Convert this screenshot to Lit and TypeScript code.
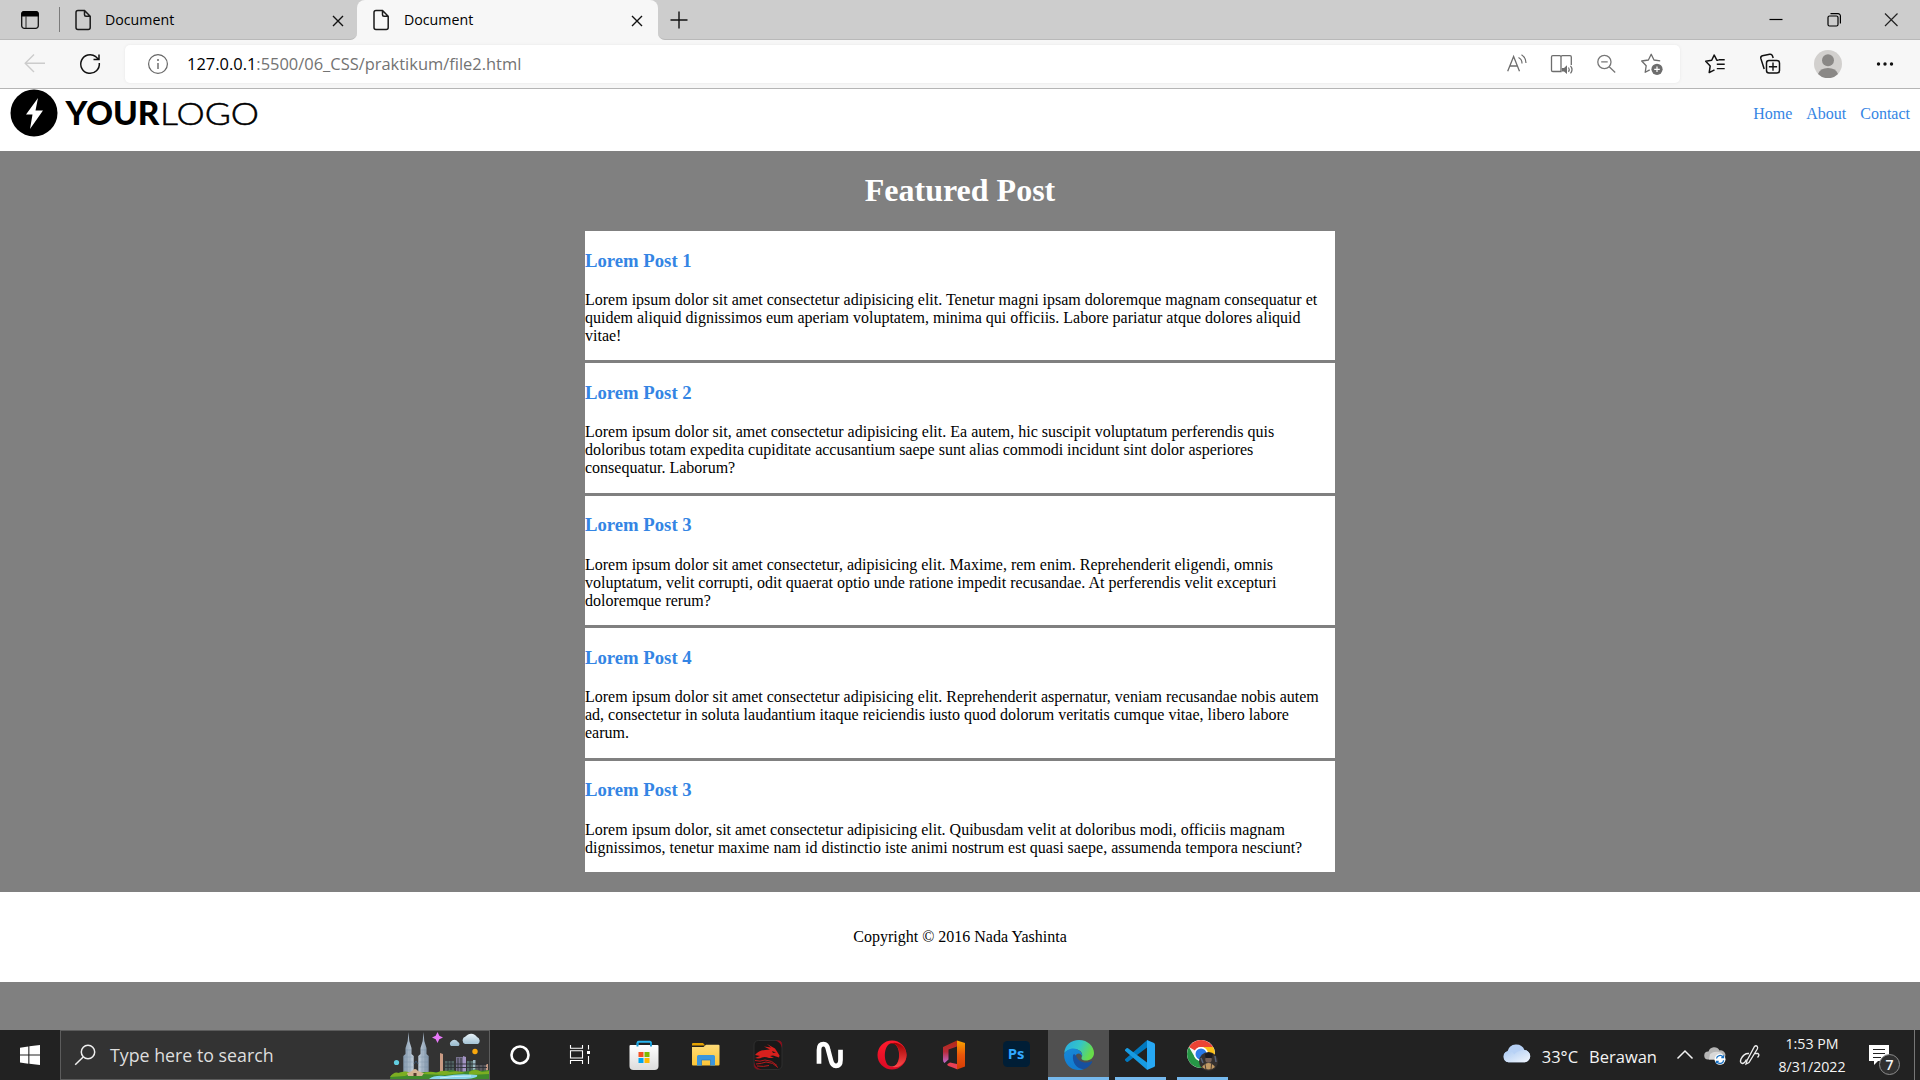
import { LitElement, html, svg, css, type TemplateResult } from "lit";
import { customElement } from "lit/decorators.js";

/** Every icon is drawn around the origin, so it stays centred in its cell. */
const ico = (w: number, h: number, body: unknown): TemplateResult =>
  html`<svg width=${w} height=${h} viewBox="${-w / 2} ${-h / 2} ${w} ${h}" fill="none">${body}</svg>`;

const closeX = ico(14, 14, svg`<path d="M-5-5L5 5M5-5L-5 5" stroke="#111" stroke-width="1.4"/>`);

const pageIcon = ico(18, 22, svg`<path d="M-5-9.5H1.5L7.2-3.8V7.5a2 2 0 0 1-2 2H-5a2 2 0 0 1-2-2V-7.5a2 2 0 0 1 2-2ZM1.5-9.5V-5.3a1.5 1.5 0 0 0 1.5 1.5H7.2" stroke="#1a1a1a" stroke-width="1.5"/>`);

const icons = {
  workspace: ico(20, 20, svg`
    <rect x="-8.3" y="-8.3" width="16.6" height="16.6" rx="2.6" stroke="#111" stroke-width="1.3"/>
    <path d="M-8.8-3.6V-6a3 3 0 0 1 3-3H5.8a3 3 0 0 1 3 3v2.400Z" fill="#000"/><path d="M-4-4V8" stroke="#333" stroke-width="1.1"/>`),
  plus: ico(20, 20, svg`<path d="M-8.500 0H8.500M0-8.500V8.500" stroke="#111" stroke-width="1.4"/>`),
  minimize: ico(16, 16, svg`<path d="M-6.500-.5H6.500" stroke="#000" stroke-width="1.2"/>`),
  restore: ico(16, 16, svg`<rect x="-6" y="-4" width="10" height="10" rx="1.500" stroke="#000" stroke-width="1.2"/><path d="M-3.500-6.400H4a2.400 2.400 0 0 1 2.400 2.400V3.500" stroke="#000" stroke-width="1.2"/>`),
  close: ico(16, 16, svg`<path d="M-6-6.500L6.500 6M6.500-6.500L-6 6" stroke="#222" stroke-width="1.200"/>`),
  back: ico(24, 24, svg`<path d="M10-.8H-9.500M-1-9.500L-9.800-.8L-1 8" stroke="#ccc" stroke-width="1.400"/>`),
  refresh: ico(24, 24, svg`<path d="M9.300-1A9.300 9.300 0 1 1 5.800-7.300L8-5.300M9-9.600V-4.600H3.500" stroke="#111" stroke-width="1.500"/>`),
  info: ico(22, 22, svg`<circle r="9.400" stroke="#666" stroke-width="1.200"/><path d="M0-1V5" stroke="#666" stroke-width="1.400"/><circle cy="-4" r="1" fill="#666"/>`),
  read: ico(24, 24, svg`<path d="M-9.300 7.300L-3.400-7.500L2.500 7.300M-7.200 2H.5" stroke="#6d6d6d" stroke-width="1.300"/><path d="M1.500-6.500A6.500 6.500 0 0 1 5-.5M4.500-9.300A10 10 0 0 1 9-1" stroke="#6d6d6d" stroke-width="1.200"/>`),
  book: ico(26, 24, svg`<path d="M-1 7.500V-7a1.300 1.300 0 0 0-1.300-1.300H-9.200A1.300 1.300 0 0 0-10.500-7V6.200A1.300 1.300 0 0 0-9.200 7.500ZM-1-7A1.300 1.300 0 0 1 .3-8.300H8A1.300 1.300 0 0 1 9.300-7V1" stroke="#6d6d6d" stroke-width="1.300"/><path d="M-.2 4H2L5 1.200V10L2 7.600H-.2Z" fill="#6d6d6d"/><path d="M6.500 3.500Q8 5.500 6.500 7.800M8.500 1.800Q11.500 5.500 8.500 9.400" stroke="#6d6d6d" stroke-width="1.200"/>`),
  zoom: ico(24, 24, svg`<g transform="translate(-.8 0)"><circle cx="-1.800" cy="-2" r="6.600" stroke="#777" stroke-width="1.300"/><path d="M3 2.800L9 8.500M-5-2.200H1.500" stroke="#777" stroke-width="1.300"/></g>`),
  star: ico(26, 24, svg`<g transform="translate(-.8 -.5)"><path d="M9-2.700L2.800-3.500L0-9.200L-2.800-3.500L-9.500-2.500L-5 2.200L-6 8.800L-1.500 6.400" stroke="#6d6d6d" stroke-width="1.300" stroke-linejoin="round"/><circle cx="5.800" cy="5.800" r="5.600" fill="#6d6d6d"/><path d="M3 5.800H8.600M5.800 3V8.600" stroke="#fff" stroke-width="1.200"/></g>`),
  favorites: ico(24, 24, svg`<path d="M3.500-3.800L1.800-3.800L-.8-9L-3.300-3.700L-9.300-2.800L-4.800 1.900L-5.800 8.600L-.5 5.800" stroke="#111" stroke-width="1.500" stroke-linejoin="round"/><path d="M3.500-4.200H9.700M1.800 .2H9.700M1.800 4.600H9.700" stroke="#111" stroke-width="1.400"/>`),
  collections: ico(24, 24, svg`<g transform="translate(-.8 -.4)"><rect x="-3.700" y="-3.200" width="13" height="12.600" rx="2.500" stroke="#111" stroke-width="1.500"/><path d="M2.800-1V7.200M-1.300 3.100H6.900" stroke="#111" stroke-width="1.400"/><path d="M-6 5.300L-9.400-5.200Q-9.800-7.200-7.800-7.800L-.5-9.400Q1.500-9.800 2.200-7.800L3-5.500" stroke="#111" stroke-width="1.500"/></g>`),
  avatar: ico(28, 28, svg`<circle r="14" fill="#d2d0ce"/><circle cy="-3.800" r="6" fill="#8a8886"/><path d="M-10 10Q-8 4 0 4T10 10A14 14 0 0 1-10 10Z" fill="#8a8886"/>`),
  dots: ico(20, 8, svg`<circle cx="-6.500" r="1.700" fill="#111"/><circle r="1.700" fill="#111"/><circle cx="6.500" r="1.700" fill="#111"/>`),

  windows: ico(20, 20, svg`<path d="M-10-7.200L-1.700-8.500V-.6H-10ZM-.6-8.700L10-10V-.6H-.6ZM-10 .5H-1.700V8.700L-10 7.500ZM-.6 .5H10V10L-.6 8.800Z" fill="#fff"/>`),
  search: ico(22, 22, svg`<circle cx="3" cy="-3" r="6.700" stroke="#f0f0f0" stroke-width="1.500"/><path d="M-1.800 2L-9.800 9.800" stroke="#f0f0f0" stroke-width="1.500"/>`),
  cortana: ico(22, 22, svg`<circle r="8.500" stroke="#fff" stroke-width="2.600"/>`),
  taskview: ico(22, 22, svg`<path d="M-9.500-10V-6.700H2.500V-10M-9.500 9V5.500H2.500V9M-9.500-4.300H2.500V3H-9.500ZM8.500-10V-5.500M8.500 1V9" stroke="#fff" stroke-width="1.100"/><rect x="7" y="-4" width="3" height="3" fill="#fff"/>`),
  store: ico(30, 30, svg`
    <defs><linearGradient id="st" x2="0" y2="1"><stop stop-color="#fff"/><stop offset="1" stop-color="#dcdcdc"/></linearGradient></defs>
    <path d="M-6.500-9V-12.200A1.200 1.200 0 0 1-5.300-13.200H5.800A1.200 1.200 0 0 1 7-12.200V-9" stroke="#29b6f0" stroke-width="1.900"/>
    <path d="M-13.500-10H13.500A1 1 0 0 1 14.500-9V11A4 4 0 0 1 10.500 15H-10.500A4 4 0 0 1-14.500 11V-9A1 1 0 0 1-13.500-10Z" fill="url(#st)"/>
    <path d="M-6.500-8.500V-12M7-8.500V-12" stroke="#1599d6" stroke-width="1.900"/>
    <path d="M-5.500-3H-.5V2H-5.500Z" fill="#f25022"/><path d="M.5-3H5.500V2H.5Z" fill="#7fba00"/><path d="M-5.500 3H-.5V8H-5.500Z" fill="#00a4ef"/><path d="M.5 3H5.500V8H.5Z" fill="#ffb900"/>`),
  explorer: ico(30, 26, svg`
    <defs><linearGradient id="ex" x2="0" y2="1"><stop stop-color="#ffdc78"/><stop offset="1" stop-color="#fcc536"/></linearGradient></defs>
    <path d="M-14-11Q-14-12-13-12H-3L-.8-9.500H-14Z" fill="#e6a200"/><path d="M-14-9V9.500Q-14 10.500-13 10.500H12.500Q13.500 10.500 13.500 9.500V-9.300Q13.500-10.200 12.500-10.200H0L-2.500-8H-14Z" fill="url(#ex)"/>
    <path d="M-9 10.500V1.500A1.500 1.500 0 0 1-7.500 0H7.500A1.500 1.500 0 0 1 9 1.500V10.500H4.500V5H-4.500V10.500Z" fill="#3b96dd"/><path d="M-4.500 10.500V5H4.500V10.500" stroke="#2277c4" stroke-width=".7"/>`),
  dragon: ico(30, 30, svg`
    <rect x="-14" y="-14.500" width="28" height="29" rx="4.500" fill="#191919" stroke="#333" stroke-width=".8"/>
    <path d="M7-14.500H10A4 4 0 0 1 14-10.500V-7Q13-13 7-14.500ZM-14 7V10A4.500 4.500 0 0 0-9.500 14.500H-6Q-13 13-14 7Z" fill="#8c0f1c"/>
    <path d="M-13 0Q-9-4.500-3-5L2-5.500L-4-8.500L3-7.500L-1-11L7-6.500L9-3.500L11.500 .5L11 2.500L8 1.500L5 .5L2 1L6 3L1 3Q-3 1.500-6 2.500Q-9 4-13 3L-8 1Z" fill="#d8201d"/>
    <path d="M-13 5.500Q-8 7-3 5Q4 5 9 10.500M-12 9Q-6 8.500-2 7Q5 7 10 12.500M-11 11Q-4 12 1 10.500" stroke="#b81a1c" stroke-width="1"/>
    <path d="M4-4L8-2.500L5-2Z" fill="#191919"/>`),
  nIcon: ico(30, 30, svg`<path d="M-11 6.500V-5Q-11-10.800-6.500-10.800Q-2.700-10.800-1.800-5L1 5.500Q2.200 10.800 6 10.800Q10.500 10.800 10.500 5V-3" stroke="#fff" stroke-width="4.700" stroke-linecap="square" stroke-linejoin="round"/>`),
  opera: ico(30, 30, svg`
    <defs><linearGradient id="op" x2="0" y2="1"><stop stop-color="#ff1b2d"/><stop offset="1" stop-color="#d90a24"/></linearGradient><linearGradient id="op2" x2="0" y2="1"><stop stop-color="#9c0000"/><stop offset="1" stop-color="#ff4b4b"/></linearGradient></defs>
    <path fill-rule="evenodd" d="M0-14.500A14.500 14.500 0 1 0 0 14.500A14.500 14.500 0 1 0 0-14.500ZM0-11.800C-9.500-11.800-9.500 11.800 0 11.800C9.500 11.800 9.500-11.800 0-11.800Z" fill="url(#op)"/>
    <path d="M-4.500-9.800C3-16 14.500-10 14.500 0S3 16-4.500 9.800C2.500 14.500 7.500 8 7.500 0S2.500-14.500-4.500-9.800Z" fill="url(#op2)"/>`),
  office: ico(26, 30, svg`
    <defs><linearGradient id="of" x2="0" y2="1"><stop stop-color="#b22a12"/><stop offset=".5" stop-color="#b92b3b"/><stop offset="1" stop-color="#c06ad0"/></linearGradient><linearGradient id="of2" x2="0" y2="1"><stop stop-color="#f7a400"/><stop offset=".5" stop-color="#e9560a"/><stop offset="1" stop-color="#d43b06"/></linearGradient></defs>
    <path d="M-11-8L3-14.500V-8.500L-5.500-5.500V4.500L-9.500 8Q-11 7-11 5Z" fill="url(#of)"/><path d="M-6.500 9L-4 7.500L3 9V14.300Q0 13-5.500 11Q-7.500 10-6.500 9Z" fill="#e94055"/><path d="M3-14.500L11-12V11.500L3 14.500Z" fill="url(#of2)"/>`),
  edge: ico(30, 30, svg`
    <defs><linearGradient id="e1" x2="1" y2=".35"><stop stop-color="#26a9e6"/><stop offset=".55" stop-color="#35c5c6"/><stop offset="1" stop-color="#68dc4a"/></linearGradient><linearGradient id="e2" x2=".4" y2="1"><stop stop-color="#1789d8"/><stop offset="1" stop-color="#127bd0"/></linearGradient></defs>
    <path d="M-14.800-2C-14-10-8-15 0-15C9-15 15-8.500 15-2C15 3 11 5.500 7 5.500C3.500 5.500 1.700 4 2.800 2C5-4-3-7-8-5.500C-11-5-13.500-3.500-14.800-2Z" fill="url(#e1)"/>
    <path d="M-14.900-1C-13-5-7-8-1.500-5.500C2-4 3.700-1 3.200 1.500C2-2-2-3-3.500 1C-4.500 6 0 12 5 14C-5 18-15.500 10-14.900-1Z" fill="url(#e2)"/>
    <path d="M-6 0C-7 8-2 14 4.500 14.200C8.500 13 11 10.500 13 7.400C13.500 6.500 12.800 6 12 6.500C6 9.500-1.500 6-2.800 1C-4-1-5.500-1-6 0Z" fill="#1650a0"/>`),
  vscode: ico(30, 30, svg`<path d="M7-7.500L-12 6.800Q-12.700 7.400-13.500 6.700L-14.800 5.500Q-15.500 4.700-14.700 4L7-14.800Z" fill="#0078bf"/><path d="M7 7.500L-12-6.800Q-12.700-7.400-13.500-6.700L-14.800-5.500Q-15.500-4.700-14.700-4L7 14.800Z" fill="#179be2"/><path d="M7-15L14-12Q15-11.500 15-10.500V10.500Q15 11.500 14 12L7 15Z" fill="#27a8f4"/>`),
  chrome: ico(34, 32, svg`
    <g transform="translate(-1 -1)"><circle r="14" fill="#f5f5f5"/><path d="M-12.100-7A14 14 0 0 1 12.100-7H0A7 7 0 0 0-6-3.500Z" fill="#ea4335"/><path d="M-12.100-7A14 14 0 0 0 0 14L6 3.500A7 7 0 0 1-6 3.500Z" fill="#269746"/><path d="M12.100-7A14 14 0 0 1 0 14L6 3.500A7 7 0 0 0 0-7Z" fill="#fbc116"/><circle r="7" fill="#fff"/><circle r="5.500" fill="#2879e8"/></g>
    <circle cx="6.500" cy="6.500" r="9.500" fill="#34302f"/><path d="M0 12Q3 8 6.500 8T13 12A9.500 9.500 0 0 1 0 12Z" fill="#c29a65"/><circle cx="6.500" cy="4.500" r="3.200" fill="#756057"/><path d="M3-1Q7-4 11-1L10 3H3.500Z" fill="#1b1a20"/><path d="M3 9L4 15M9.500 9L9 15" stroke="#4a3b30"/><path d="M-1 3L1 8M13 1L14 7" stroke="#59647a" stroke-width="1.500"/>`),
  cloud: ico(30, 22, svg`
    <defs><linearGradient id="cl" x2="1" y2="1"><stop stop-color="#a9c9f2"/><stop offset="1" stop-color="#f3f7fd"/></linearGradient></defs>
    <g transform="translate(0 -1.500)"><path d="M-8.500 8.800A5.700 5.700 0 0 1-9.500-2.300A9 9 0 0 1 7.500-3.500A6.200 6.200 0 0 1 8 8.800Z" fill="#b7d1f5"/><path d="M-8.500 8.800A5.700 5.700 0 0 1-8.500-2.400Q-4-2.200-3 1Q1-3.500 7.500-3.500A6.200 6.200 0 0 1 8 8.800Z" fill="url(#cl)"/></g>`),
  chevron: ico(18, 12, svg`<path d="M-7.500 3.500L0-4L7.500 3.500" stroke="#f2f2f2" stroke-width="1.500"/>`),
  onedrive: ico(22, 20, svg`<path d="M-7 4.500A4 4 0 0 1-6.500-3.500A6 6 0 0 1 4.500-4.500A4.500 4.500 0 0 1 7 4.500Z" fill="#b5b5b5"/><path d="M-5-1Q0-5 7-2L5 4.500H-6Z" fill="#d9d9d9"/><circle cx="5" cy="4.300" r="5.500" fill="#fff"/><path d="M1.500 3.500A3.600 3.600 0 0 1 8 2M8.600 5.200A3.600 3.600 0 0 1 2 6.800M8.500 .3V2.500H6.300M1.500 8.500V6.300H3.700" stroke="#1670c4" stroke-width="1.300"/>`),
  pen: ico(24, 24, svg`<path d="M-3 5.500L4.500-8.500Q6-10 7.300-8.500Q8-7.500 7.300-6L-1 7.500L-4 9Z" stroke="#eee" stroke-width="1.300"/><path d="M-1-1.500Q-6-2-9 4Q-10.500 8-7.500 8.500Q-5 8-3.500 4.500M4.500-1.500H8Q10 0 7.500 2.500" stroke="#eee" stroke-width="1.400"/>`),
};

const skyline = html`<svg class="skyline" width="104" height="48" viewBox="0 3 104 48">
  <defs><linearGradient id="tw"><stop stop-color="#8498ac"/><stop offset=".5" stop-color="#d0dce7"/><stop offset="1" stop-color="#7f93a8"/></linearGradient>
  <linearGradient id="ck" x2="0" y2="1"><stop stop-color="#e8f3f9"/><stop offset="1" stop-color="#98b9cd"/></linearGradient></defs>
  <path d="M23.500 4L24.300 13L26.500 20V26L28.700 28V47H18.300V28L20.500 26V20L22.700 13ZM38.500 4L39.300 13L41.500 20V26L43.700 28V47H33.300V28L35.500 26V20L37.700 13Z" fill="url(#tw)"/>
  <path d="M20.500 22H26.500M35.500 22H41.500M19 29H28M34 29H43M19 34H28M34 34H43M19 39H28M34 39H43M22 21V46M25 21V46M37 21V46M40 21V46" stroke="#66829a" stroke-width=".5" opacity=".5"/>
  <path d="M29 36L31 33L33 36" stroke="#39516b" fill="none"/>
  <path d="M52.500 4L54.300 7.800L58 9.500L54.300 11.200L52.500 15L50.700 11.200L47 9.500L50.700 7.800Z" fill="#e879f9"/>
  <path d="M66 18A2.800 2.800 0 0 1 66 13.500A4 4 0 0 1 73 14A2.300 2.300 0 0 1 73.500 18ZM80 16A4 4 0 0 1 80.500 8.500A7 7 0 0 1 92 9A4 4 0 0 1 93 16Z" fill="url(#ck)"/>
  <circle cx="11.500" cy="34.500" r="2.600" fill="#62cfe2"/><circle cx="90" cy="23.500" r="2.700" fill="#faa80c"/>
  <path d="M55 25L58 26V46H55Z" fill="#c99a83"/><path d="M60 33H69V45H60Z" fill="#4f6261"/><path d="M71 29H78V45H71Z" fill="#77718e"/><path d="M78 28L81 29V45H78Z" fill="#a393c4"/><path d="M82 33H90V45H82Z" fill="#566d6b"/><path d="M88 32H90.500V45H88Z" fill="#9cb9c5"/><path d="M91 37H102V45H91Z" fill="#5c5b60"/><path d="M101 36H103V46H101Z" fill="#c59a84"/>
  <path d="M60 36H102M60 39.500H102M63 31V45M66 31V45M73 30V45M76 30V45M85 33V45M94 37V45M98 37V45" stroke="#2d3035" stroke-width=".9"/>
  <path d="M5 51Q5 46 11 46Q16 43 22 44H60Q66 40 73 44L85 43Q90 40 95 43L104 42V51Z" fill="#3f8a2c"/>
  <path d="M5 49Q9 43 14 45Q20 42 27 45L20 48ZM36 46Q45 42 51 45Q58 41 65 44Q74 42 80 45L60 47ZM84 44Q90 40 97 44L104 43V46L84 47Z" fill="#7cae22"/>
  <path d="M22 45Q25 44 27 43Q30 39 33 43L39 45L37 48H23Z" fill="#d5b493"/><path d="M28.500 45H31.500V48H28.500Z" fill="#553b2b"/>
  <path d="M44 51Q49 47 60 48Q75 45 92 47Q94 50 80 51Z" fill="#87d5ee"/><path d="M55 50Q68 48 86 48" stroke="#cceff8" fill="none"/>
</svg>`;

const posts = [
  ["Lorem Post 1", "Lorem ipsum dolor sit amet consectetur adipisicing elit. Tenetur magni ipsam doloremque magnam consequatur et quidem aliquid dignissimos eum aperiam voluptatem, minima qui officiis. Labore pariatur atque dolores aliquid vitae!"],
  ["Lorem Post 2", "Lorem ipsum dolor sit, amet consectetur adipisicing elit. Ea autem, hic suscipit voluptatum perferendis quis doloribus totam expedita cupiditate accusantium saepe sunt alias commodi incidunt sint dolor asperiores consequatur. Laborum?"],
  ["Lorem Post 3", "Lorem ipsum dolor sit amet consectetur, adipisicing elit. Maxime, rem enim. Reprehenderit eligendi, omnis voluptatum, velit corrupti, odit quaerat optio unde ratione impedit recusandae. At perferendis velit excepturi doloremque rerum?"],
  ["Lorem Post 4", "Lorem ipsum dolor sit amet consectetur adipisicing elit. Reprehenderit aspernatur, veniam recusandae nobis autem ad, consectetur in soluta laudantium itaque reiciendis iusto quod dolorum veritatis cumque vitae, libero labore earum."],
  ["Lorem Post 3", "Lorem ipsum dolor, sit amet consectetur adipisicing elit. Quibusdam velit at doloribus modi, officiis magnam dignissimos, tenetur maxime nam id distinctio iste animi nostrum est quasi saepe, assumenda tempora nesciunt?"],
];

@customElement("browser-chrome")
class BrowserChrome extends LitElement {
  static styles = css`
    :host { display: block; font-family: "Open Sans", "Noto Sans", sans-serif; color: #000; }
    * { box-sizing: border-box; }
    svg { display: block; flex: none; }
    .strip { display: flex; height: 40px; background: #f7f7f7; }
    .dark { background: #cdcdcd; border-bottom: 1px solid #b9b9b9; display: flex; align-items: center; height: 40px; }
    .left { width: 357px; border-bottom-right-radius: 7px; }
    .work { width: 59px; display: flex; justify-content: center; }
    .rule { width: 1px; height: 25px; background: #7b7b7b; margin-right: 14px; }
    .tab { flex: 1; display: flex; align-items: center; font-size: 14.200px; line-height: 20px; }
    .tab span { flex: 1; margin-left: 13px; }
    .tab .x { width: 14px; margin-right: 12px; margin-top: 2px; }
    .wrap { width: 301px; height: 40px; background: linear-gradient(#cdcdcd 20px, #f7f7f7 20px); }
    .active { height: 40px; padding-left: 15px; background: #f7f7f7; border-radius: 8px 8px 0 0; }
    .active span { margin-left: 14px; }
    .active .x { margin-right: 14px; }
    .right { flex: 1; border-bottom-left-radius: 7px; justify-content: space-between; padding-left: 11px; }
    .controls { display: flex; }
    .controls div { width: 57.500px; display: flex; justify-content: center; }
    .toolbar { display: flex; align-items: center; height: 49px; background: #f7f7f7; border-bottom: 1px solid #b5b5b5; }
    .nav { width: 125px; display: flex; gap: 31px; padding-left: 23px; }
    .address { width: 1555px; height: 38px; background: #fff; border-radius: 5px; box-shadow: 0 0 3px #e6e6e6; display: flex; align-items: center; padding: 0 6px 0 22px; font-size: 16.450px; }
    .url { flex: 1; margin-left: 18px; color: #737373; line-height: 24px; }
    .url b { font-weight: 400; color: #000; }
    .cell { width: 45px; display: flex; justify-content: center; }
    .actions { flex: 1; display: grid; grid-template-columns: 56px 55px 59px 56px; padding-left: 7px; align-items: center; justify-items: center; }
  `;
  render() {
    return html`
      <div class="strip">
        <div class="dark left"><div class="work">${icons.workspace}</div><div class="rule"></div>
          <div class="tab">${pageIcon}<span>Document</span><div class="x">${closeX}</div></div></div>
        <div class="wrap"><div class="tab active">${pageIcon}<span>Document</span><div class="x">${closeX}</div></div></div>
        <div class="dark right">${icons.plus}<div class="controls"><div>${icons.minimize}</div><div>${icons.restore}</div><div>${icons.close}</div></div></div>
      </div>
      <div class="toolbar">
        <div class="nav">${icons.back}${icons.refresh}</div>
        <div class="address">${icons.info}<div class="url"><b>127.0.0.1</b>:5500/06_CSS/praktikum/file2.html</div>
          ${[icons.read, icons.book, icons.zoom, icons.star].map((i) => html`<div class="cell">${i}</div>`)}</div>
        <div class="actions">${icons.favorites}${icons.collections}${icons.avatar}${icons.dots}</div>
      </div>`;
  }
}

@customElement("blog-page")
class BlogPage extends LitElement {
  static styles = css`
    :host { display: block; height: 941px; background: #808080; font: 16px/18px "Liberation Serif", serif; color: #000; }
    * { box-sizing: border-box; }
    header { height: 62px; background: #fff; display: flex; justify-content: space-between; padding: 0 10px; }
    .logo { display: block; }
    .bold { font: 900 31.500px Lato, sans-serif; }
    .thin { font: 300 31.500px Lato, sans-serif; }
    nav { display: flex; gap: 14px; padding-top: 16px; }
    .link { color: #3485e4; text-decoration: none; }
    h1 { margin: 0; padding: 21.440px 0; font-size: 32px; line-height: 37px; color: #fff; text-align: center; }
    main { width: 750px; margin: 0 auto; display: flex; flex-direction: column; gap: 3px; padding-bottom: 20px; }
    article { background: #fff; padding: 18.720px 0 15.500px; }
    h3 { margin: 0 0 19.220px; font-size: 18.720px; line-height: 22px; color: #3485e4; }
    p { margin: 0; }
    footer { height: 90px; background: #fff; display: flex; align-items: center; justify-content: center; }
  `;
  render() {
    return html`
      <header>
        <svg class="logo" width="252" height="50" viewBox="10 89 252 50">
          <circle cx="34" cy="113" r="23.500"/><path d="M38 98L26 114.500H32.500L30 129L43 110.500H35.500Z" fill="#fff"/>
          <text class="bold" x="65.500" y="124.500" textLength="94" lengthAdjust="spacingAndGlyphs">YOUR</text>
          <text class="thin" x="160" y="124.500" textLength="99" lengthAdjust="spacingAndGlyphs" stroke="#000" stroke-width=".5">LOGO</text>
        </svg>
        <nav>${["Home", "About", "Contact"].map((t) => html`<a class="link">${t}</a>`)}</nav>
      </header>
      <h1>Featured Post</h1>
      <main>${posts.map(([t, b]) => html`<article><h3>${t}</h3><p>${b}</p></article>`)}</main>
      <footer>Copyright © 2016 Nada Yashinta</footer>`;
  }
}

@customElement("task-bar")
class TaskBar extends LitElement {
  static styles = css`
    :host { display: flex; height: 50px; background: #222; color: #f4f4f4; font-family: "Open Sans", "Noto Sans", sans-serif; }
    * { box-sizing: border-box; }
    svg { display: block; flex: none; }
    .cell { width: 60px; display: flex; align-items: center; justify-content: center; }
    .search { width: 430px; height: 50px; border: 1px solid #5c5c5c; background: #333; display: flex; align-items: center; padding-left: 13px; font-size: 17.800px; color: #dedede; }
    .search span { flex: 1; margin-left: 14px; }
    .app { width: 62px; display: flex; align-items: center; justify-content: center; }
    .apps { display: flex; margin-left: 3px; }
    .run { background: linear-gradient(#76b9ed, #76b9ed) center bottom / 51px 3px no-repeat; }
    .current { background: linear-gradient(#76b9ed, #76b9ed) bottom / 100% 3px no-repeat #505050; width: 61px; margin-left: 1px; }
    .ps { width: 27px; height: 26px; border-radius: 4.500px; background: #001e36; color: #31a8ff; font-weight: 700; font-size: 14.800px; display: flex; align-items: center; justify-content: center; margin-top: -2px; padding-bottom: 2px; }
    .tray { flex: 1; display: flex; align-items: center; justify-content: flex-end; }
    .weather { display: flex; align-items: center; font-size: 16.500px; white-space: pre; }
    .deg { margin: 2px 11px 0 10px; }
    .city { margin: 2px 19px 0 0; }
    .chev { margin-right: 10px; }
    .drive { margin-right: 12px; }
    .clock { width: 78px; margin-left: 11px; font-size: 14.200px; line-height: 23px; text-align: center; }
    .note { position: relative; width: 44px; height: 50px; margin-left: 11px; }
    .bubble { position: absolute; left: 7px; top: 15px; }
    .count { position: absolute; left: 17px; top: 24px; width: 21px; height: 21px; border: 1px solid #8c8c8c; border-radius: 50%; background: #303030; font-size: 14px; font-weight: 600; line-height: 19px; text-align: center; }
    .edge { width: 1px; height: 50px; background: #777; margin-left: 8px; margin-right: 5px; }
  `;
  render() {
    return html`
      <div class="cell">${icons.windows}</div>
      <div class="search">${icons.search}<span>Type here to search</span>${skyline}</div>
      <div class="cell">${icons.cortana}</div><div class="cell">${icons.taskview}</div>
      <div class="apps">
        ${[icons.store, icons.explorer, icons.dragon, icons.nIcon, icons.opera, icons.office].map((i) => html`<div class="app">${i}</div>`)}
        <div class="app"><div class="ps">Ps</div></div>
        <div class="app current">${icons.edge}</div><div class="app run">${icons.vscode}</div><div class="app run">${icons.chrome}</div>
      </div>
      <div class="tray">
        <div class="weather">${icons.cloud}<span class="deg">33°C</span><span class="city">Berawan</span></div>
        <div class="chev">${icons.chevron}</div><div class="drive">${icons.onedrive}</div>${icons.pen}
        <div class="clock">1:53 PM<br />8/31/2022</div>
        <div class="note">
          <svg class="bubble" width="20" height="20" viewBox="0 0 20 20"><path d="M0 0H20V16H9L5 20V16H0Z" fill="#fff"/><path d="M4 4.500H16M4 8.500H16M4 12.500H12" stroke="#222" stroke-width="1.200"/></svg>
          <div class="count">7</div>
        </div>
        <div class="edge"></div>
      </div>`;
  }
}

@customElement("app-root")
class AppRoot extends LitElement {
  static styles = css`
    :host { display: flex; flex-direction: column; width: 1920px; height: 1080px; overflow: hidden; background: #808080; }
  `;
  render() {
    return html`<browser-chrome></browser-chrome><blog-page></blog-page><task-bar></task-bar>`;
  }
}
